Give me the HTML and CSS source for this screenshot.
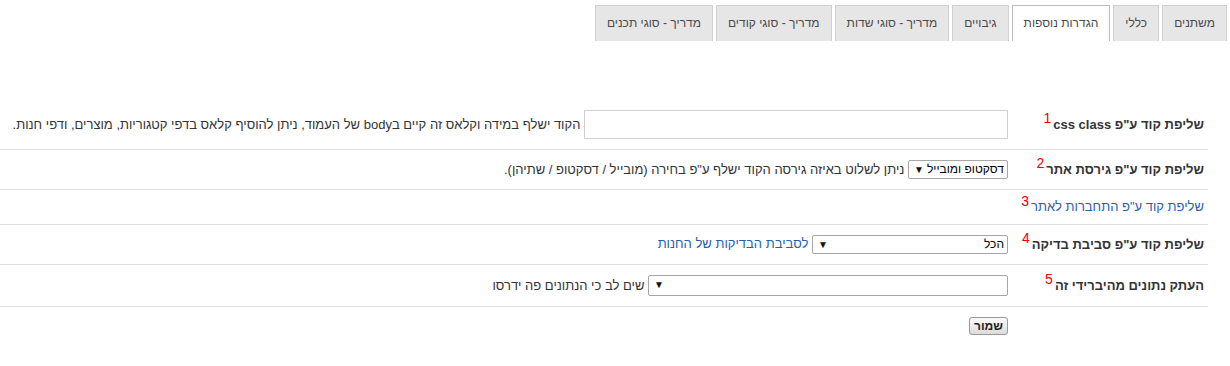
FILE: index.html
```html
<!DOCTYPE html>
<html lang="he" dir="rtl">
<head>
	<meta charset="UTF-8">
	<meta name="viewport" content="width=device-width, initial-scale=1.0">
	<title>הגדרות נוספות</title>
	<link rel="stylesheet" href="styles.css">
</head>
<body>

	<!-- Tabs -->
	<ul class="tabs">
		<li class="tab">משתנים</li>
		<li class="tab">כללי</li>
		<li class="tab active">הגדרות נוספות</li>
		<li class="tab">גיבויים</li>
		<li class="tab">מדריך - סוגי שדות</li>
		<li class="tab">מדריך - סוגי קודים</li>
		<li class="tab">מדריך - סוגי תכנים</li>
	</ul>

	<!-- Settings form -->
	<table class="form-table">
		<tr>
			<th>שליפת קוד ע"פ css class&rlm;<sup class="num">1</sup></th>
			<td>
				<input type="text" class="text-input">
				<span class="desc">הקוד ישלף במידה וקלאס זה קיים בbody של העמוד, ניתן להוסיף קלאס בדפי קטגוריות, מוצרים, ודפי חנות.</span>
			</td>
		</tr>
		<tr>
			<th>שליפת קוד ע"פ גירסת אתר<sup class="num">2</sup></th>
			<td>
				<span class="select select-sm">דסקטופ ומובייל</span>
				<span class="desc">ניתן לשלוט באיזה גירסה הקוד ישלף ע"פ בחירה (מובייל / דסקטופ / שתיהן).</span>
			</td>
		</tr>
		<tr>
			<th class="plain"><a href="#">שליפת קוד ע"פ התחברות לאתר</a><sup class="num">3</sup></th>
			<td></td>
		</tr>
		<tr>
			<th>שליפת קוד ע"פ סביבת בדיקה<sup class="num">4</sup></th>
			<td>
				<span class="select select-md">הכל</span>
				<a href="#">לסביבת הבדיקות של החנות</a>
			</td>
		</tr>
		<tr>
			<th>העתק נתונים מהיברידי זה<sup class="num">5</sup></th>
			<td>
				<span class="select select-lg"></span>
				<span class="desc">שים לב כי הנתונים פה ידרסו</span>
			</td>
		</tr>
		<tr class="last">
			<th></th>
			<td><button class="save-btn">שמור</button></td>
		</tr>
	</table>

</body>
</html>
```

FILE: styles.css
```css
body {
	font-family: "Liberation Sans", Arial, sans-serif;
	font-size: 13px;
	color: #333;
	background-color: #fff;
	margin: 0;
	padding: 0;
}

a {
	color: #1f5fb0;
	text-decoration: none;
}

/* Tabs */
.tabs {
	list-style: none;
	margin: 0;
	padding: 5px 3px 0 0;
	display: flex;
	gap: 3px;
}

.tab {
	background-color: #e6e6e6;
	border: 1px solid #d0d0d0;
	border-bottom: none;
	color: #4a4a4a;
	font-size: 12px;
	padding: 10px 11px;
	line-height: 15px;
}

.tab.active {
	background-color: #fff;
	border-color: #bdbdbd;
}

/* Form */
.form-table {
	width: 1208px;
	margin: 59px 22px 0 0;
	border-collapse: collapse;
}

.form-table tr {
	border-bottom: 1px solid #dedede;
}

.form-table tr.last {
	border-bottom: none;
}

.form-table th {
	width: 196px;
	padding: 10px 4px 10px 0;
	text-align: right;
	font-weight: bold;
	vertical-align: middle;
	line-height: 14px;
	white-space: nowrap;
}

.form-table th.plain {
	font-weight: normal;
}

.form-table td {
	padding: 10px 0;
	vertical-align: middle;
	line-height: 14px;
	white-space: nowrap;
}

.num {
	color: #e00;
	font-weight: normal;
	font-size: 14px;
	line-height: 0;
	margin-right: 2px;
}

.text-input {
	width: 424px;
	height: 29px;
	box-sizing: border-box;
	border: 1px solid #cfcfcf;
	margin: 0;
	vertical-align: middle;
}

.desc {
	vertical-align: middle;
}

.select {
	display: inline-block;
	position: relative;
	box-sizing: border-box;
	height: 19px;
	line-height: 17px;
	border: 1px solid #a6a6a6;
	border-radius: 2px;
	padding: 0 3px 0 17px;
	font-size: 12px;
	color: #000;
	white-space: nowrap;
	overflow: hidden;
	vertical-align: middle;
	background-color: #fff;
}

.select::after {
	content: "▼";
	position: absolute;
	left: 5px;
	top: 0;
	font-size: 10px;
	color: #111;
}

.select-sm {
	width: 100px;
}

.select-md {
	width: 196px;
}

.select-lg {
	width: 360px;
	height: 21px;
}

.save-btn {
	font-family: inherit;
	font-size: 12px;
	font-weight: bold;
	color: #222;
	width: 39px;
	height: 18px;
	padding: 0;
	border: 1px solid #999;
	border-radius: 3px;
	background: linear-gradient(#fafafa, #dcdcdc);
}
```
